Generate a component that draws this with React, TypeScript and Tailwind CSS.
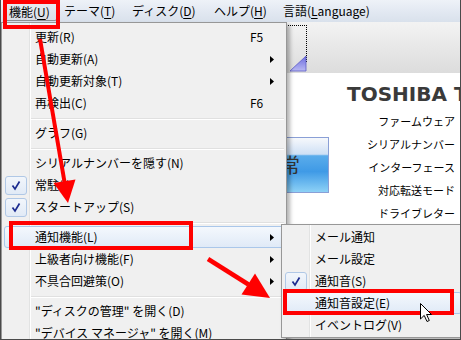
import React from 'react';

type Entry =
  | { sep: true }
  | { label: string; shortcut?: string; sub?: boolean; checked?: boolean; active?: boolean };

const mainItems: Entry[] = [
  { label: '更新(R)', shortcut: 'F5' },
  { label: '自動更新(A)', sub: true },
  { label: '自動更新対象(T)', sub: true },
  { label: '再検出(C)', shortcut: 'F6' },
  { sep: true },
  { label: 'グラフ(G)' },
  { sep: true },
  { label: 'シリアルナンバーを隠す(N)' },
  { label: '常駐(I)', checked: true },
  { label: 'スタートアップ(S)', checked: true },
  { sep: true },
  { label: '通知機能(L)', sub: true, active: true },
  { label: '上級者向け機能(F)', sub: true },
  { label: '不具合回避策(O)', sub: true },
  { sep: true },
  { label: '"ディスクの管理" を開く(D)' },
  { label: '"デバイス マネージャ" を開く(M)' },
];

const notifyItems: Entry[] = [
  { label: 'メール通知' },
  { label: 'メール設定' },
  { label: '通知音(S)', checked: true },
  { label: '通知音設定(E)', active: true },
  { label: 'イベントログ(V)' },
];

const menuBar = [
  { pre: '機能(', key: 'U', post: ')', cls: 'ml-[4px] w-[52px] pl-[3px]', pressed: true },
  { pre: 'テーマ(', key: 'T', post: ')', cls: 'w-[68px] pl-[7px]' },
  { pre: 'ディスク(', key: 'D', post: ')', cls: 'w-[82px] pl-[7px]' },
  { pre: 'ヘルプ(', key: 'H', post: ')', cls: 'w-[69px] pl-[7px]' },
  { pre: '言語(', key: 'L', post: 'anguage)', cls: 'w-[110px] pl-[7px]' },
];

function CheckBox() {
  return (
    <div className="w-[22px] h-[19px] rounded-[3px] border border-[#b0c8e6] bg-gradient-to-b from-[#f2f6fb] to-[#e1eaf6] flex items-center justify-center">
      <svg width="20" height="17" viewBox="0 0 20 17">
        <path d="M6.5 8.5 L9 12 L13.5 4.5" fill="none" stroke="#1c2b8f" strokeWidth="1.7" />
      </svg>
    </div>
  );
}

function MenuItem({ label, shortcut, sub, checked, active }: { label: string; shortcut?: string; sub?: boolean; checked?: boolean; active?: boolean }) {
  return (
    <div
      className={`relative flex items-center h-[22px] rounded-[3px] border ${
        active
          ? 'border-[#aac7ea] bg-gradient-to-b from-[#f4f8fd] to-[#e0eaf7]'
          : 'border-transparent'
      }`}
    >
      <div className="w-[26px] shrink-0 flex items-center">{checked && <CheckBox />}</div>
      <div className="flex-1 pl-[4px] leading-[20px] whitespace-nowrap">{label}</div>
      <div className="w-[18px] shrink-0 leading-[20px]">{shortcut}</div>
      <div className="w-[15px] shrink-0 flex items-center">
        {sub && (
          <svg width="4" height="7" viewBox="0 0 4 7" className="ml-[2px]">
            <path d="M0 0 L4 3.5 L0 7 Z" fill="#000" />
          </svg>
        )}
      </div>
    </div>
  );
}

function Separator() {
  return (
    <div className="h-[8px] ml-[27px] pt-[4px]">
      <div className="border-t border-[#e0e0e0] border-b border-b-white" />
    </div>
  );
}

function Menu({ items, className }: { items: Entry[]; className: string }) {
  return (
    <div className={`absolute border border-[#979797] bg-[#f0f0f0] px-[2px] shadow-[3px_3px_4px_rgba(0,0,0,0.3)] ${className}`}>
      <div className="absolute top-0 bottom-0 left-[27px] w-[2px] border-l border-[#e2e3e3] bg-white" />
      {items.map((it, i) =>
        'sep' in it ? <Separator key={i} /> : <MenuItem key={i} {...it} />
      )}
    </div>
  );
}

export default function App() {
  return (
    <div className="w-[461px] h-[340px] relative overflow-hidden bg-white border-l border-r border-b border-[#4a4a4a] font-['Noto_Sans_CJK_JP',sans-serif] text-[12px] text-black">
      {/* menu bar */}
      <div className="h-[22px] pt-[2px] flex bg-gradient-to-b from-[#eef2f8] via-[#e3e9f2] to-[#d9e1ec]">
        {menuBar.map((m) => (
          <div
            key={m.key}
            className={`h-[19px] leading-[18px] whitespace-nowrap ${m.cls} ${
              m.pressed ? 'rounded-[2px] border border-[#8e9093] bg-gradient-to-b from-[#e8ecf1] to-[#dadfe6]' : ''
            }`}
          >
            {m.pre}
            <span className="underline underline-offset-2">{m.key}</span>
            {m.post}
          </div>
        ))}
      </div>

      {/* window behind the menus */}
      <div className="h-[51px] relative pt-[3px] bg-gradient-to-b from-[#f3f3f3] to-[#dcdcdc]">
        <div className="ml-[199px] w-[107px] h-[37px] border-t border-r border-dotted border-black" />
        <svg width="17" height="16" viewBox="0 0 17 16" className="absolute left-[289px] bottom-[1px]">
          <defs>
            <linearGradient id="tri" x1="0" y1="0" x2="0" y2="1">
              <stop offset="0" stopColor="#6c6ce0" />
              <stop offset="1" stopColor="#b9b9f2" />
            </linearGradient>
          </defs>
          <path d="M16 0 L16 15 L0 15 Z" fill="url(#tri)" stroke="#5a5ac8" strokeWidth="0.8" />
        </svg>
      </div>

      <div className="flex">
        <div className="w-[328px] shrink-0 pt-[64px]">
          <div className="ml-[189px] h-[56px] border border-[#8a9fd6] bg-[linear-gradient(to_bottom,#f6f8fc_0%,#cfe0f5_30%,#5aaceb_33%,#3f9ae6_62%,#8dd1f6_100%)] flex items-center justify-end pr-[28px] text-[20px] text-[#333]">
            正常
          </div>
        </div>
        <div className="flex-1 min-w-0 pt-[10px] pr-[5px]">
          <div className="ml-[18px] whitespace-nowrap font-['DejaVu_Sans',sans-serif] font-bold text-[20px] leading-[22px] text-[#3a3a3a]">
            TOSHIBA THNSNB128GMCJ
          </div>
          <div className="mt-[5px] text-right text-[11px] leading-[23px] whitespace-nowrap">
            <div>ファームウェア</div>
            <div>シリアルナンバー</div>
            <div>インターフェース</div>
            <div>対応転送モード</div>
            <div>ドライブレター</div>
            <div>対応規格</div>
          </div>
        </div>
      </div>

      {/* dropdown menus */}
      <Menu items={mainItems} className="left-0 top-[22px] w-[286px] h-[330px] pt-[3px]" />
      <Menu items={notifyItems} className="left-[280px] top-[224px] w-[184px] py-[1px]" />

      {/* annotations */}
      <div className="absolute left-[2px] top-0 w-[57px] h-[29px] border-4 border-[#ff0000]" />
      <div className="absolute left-[8px] top-[221px] w-[184px] h-[29px] border-4 border-[#ff0000]" />
      <div className="absolute left-[282px] top-[289px] w-[171px] h-[26px] border-4 border-[#ff0000]" />

      <svg width="461" height="340" viewBox="0 0 461 340" className="absolute left-[-1px] top-0 pointer-events-none">
        <line x1="40" y1="39" x2="64.5" y2="182" stroke="#ff0000" strokeWidth="4" />
        <polygon points="68,203 75.5,179.5 53.5,183" fill="#ff0000" />
        <line x1="208" y1="259" x2="248.5" y2="284.5" stroke="#ff0000" strokeWidth="4.5" />
        <polygon points="270,298 255,273.5 241.5,294.5" fill="#ff0000" />
      </svg>

      {/* mouse pointer */}
      <svg width="13" height="20" viewBox="0 0 13 20" className="absolute left-[419px] top-[303px]">
        <path d="M0.5 0.5 L0.5 16 L4.2 12.4 L7 18.5 L9.3 17.5 L6.6 11.5 L11.5 11.5 Z" fill="#fff" stroke="#000" strokeWidth="1" strokeLinejoin="round" />
      </svg>
    </div>
  );
}
